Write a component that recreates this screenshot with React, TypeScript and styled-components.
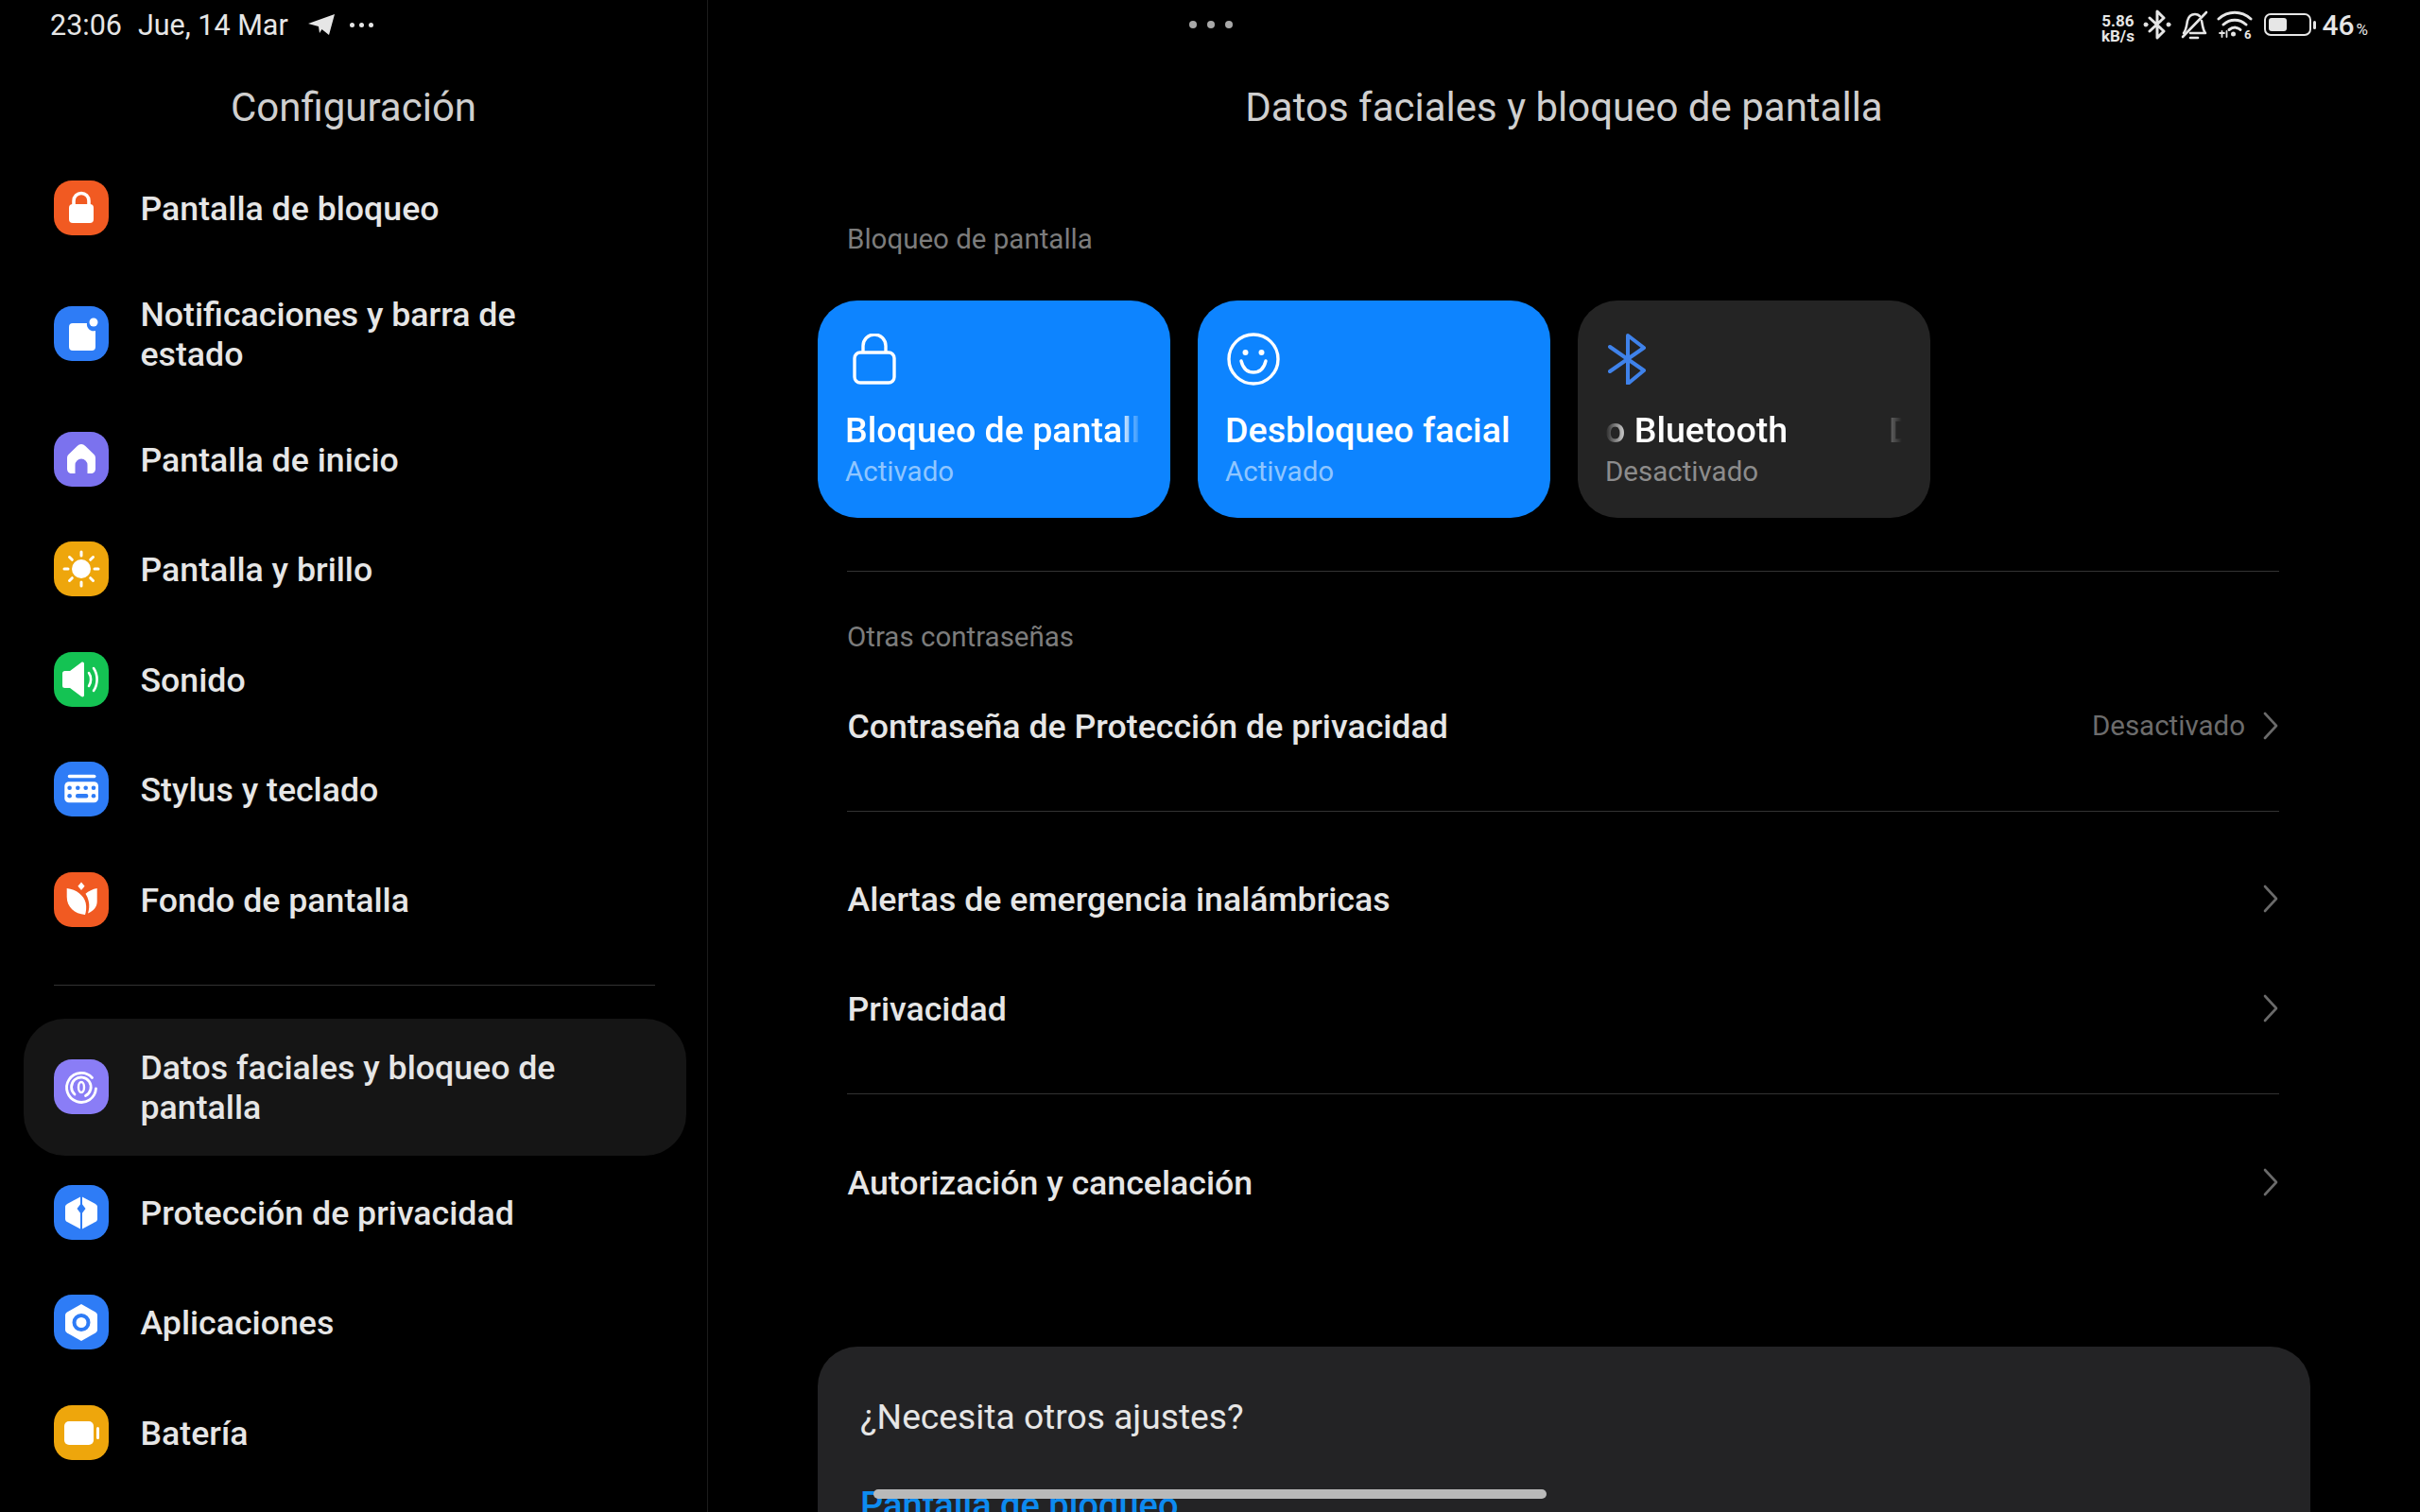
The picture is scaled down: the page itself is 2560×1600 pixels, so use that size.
import React from 'react';
import styled, { createGlobalStyle } from 'styled-components';

const GlobalStyle = createGlobalStyle`
  html, body {
    margin: 0;
    padding: 0;
    background: #000;
    font-family: Roboto, "Noto Sans", "Liberation Sans", sans-serif;
  }
`;

const Chevron = () => (
  <ChevronSvg viewBox="0 0 16 30" fill="none" stroke="#6a6a6a" strokeWidth="2.6" strokeLinecap="round" strokeLinejoin="round">
    <path d="M2 2 L14 15 L2 28" />
  </ChevronSvg>
);

const icons: Record<string, React.ReactNode> = {
  lock: (
    <>
      <path d="M21 27v-5.5a8 8 0 0 1 16 0V27" fill="none" stroke="#fff" strokeWidth="3.6" />
      <rect x="16" y="25" width="26" height="20" rx="4" fill="#fff" />
    </>
  ),
  notif: (
    <>
      <path d="M20 18h15a7 7 0 0 0 9 8v17a4 4 0 0 1-4 4H20a4 4 0 0 1-4-4V22a4 4 0 0 1 4-4z" fill="#fff" />
      <circle cx="42" cy="17" r="4.5" fill="#fff" />
    </>
  ),
  home: (
    <path d="M29 13c1.6 0 3 .8 4.3 2l9 8.8c1.4 1.4 1.7 2.6 1.7 4.4V39c0 3-2 5-5 5h-3.5V35a6.5 6.5 0 0 0-13 0v9H19c-3 0-5-2-5-5V28.2c0-1.8.3-3 1.7-4.4l9-8.8c1.3-1.2 2.7-2 4.3-2z" fill="#fff" />
  ),
  sun: (
    <>
      <circle cx="29" cy="29" r="10" fill="#fff" />
      <g stroke="#fff" strokeWidth="3" strokeLinecap="round">
        <path d="M29 11v4M29 43v4M11 29h4M43 29h4M16.5 16.5l2.8 2.8M38.7 38.7l2.8 2.8M16.5 41.5l2.8-2.8M38.7 19.3l2.8-2.8" />
      </g>
    </>
  ),
  sound: (
    <>
      <path d="M9 22.5c0-1.4 1.1-2.5 2.5-2.5H17L29 11c1.5-1 3-.2 3 1.5v33c0 1.7-1.5 2.5-3 1.5L17 38h-5.5A2.5 2.5 0 0 1 9 35.5z" fill="#fff" />
      <path d="M37 22c2.8 4 2.8 10 0 14M42 17c4.8 7 4.8 17 0 24" fill="none" stroke="#fff" strokeWidth="2.6" strokeLinecap="round" />
    </>
  ),
  keyboard: (
    <>
      <path d="M16.5 13.7h26c1 0 2 1 2.2 1.8-.2.8-1.2 1.8-2.2 1.8h-26a1.8 1.8 0 0 1 0-3.6z" fill="#fff" />
      <rect x="11.3" y="21.3" width="35.7" height="22" rx="4.5" fill="#fff" />
      <g fill="#2e7cf6">
        <circle cx="16.6" cy="27.7" r="2.3" />
        <circle cx="25.3" cy="27.7" r="2.3" />
        <circle cx="33.7" cy="27.7" r="2.3" />
        <circle cx="42" cy="27.7" r="2.3" />
        <circle cx="16.6" cy="36.3" r="2.3" />
        <rect x="23" y="34" width="13.3" height="4.6" rx="2" />
        <circle cx="42" cy="36.3" r="2.3" />
      </g>
    </>
  ),
  wallpaper: (
    <>
      <path d="M29 10.5l3.6 4.3-3.6 4.2-3.6-4.2z" fill="#fff" />
      <path d="M13.7 17c10.3 1.2 18 7.5 20 15.5 1 4.5.4 9.5-.7 12.5-11-1-19.3-8-19.3-19z" fill="#fff" />
      <path d="M45.7 17v14c0 5.5-3.7 10-9.7 12.5 1.3-4 1.8-8.5.8-12.5-.7-3.3-2-6.2-3.3-8.2 3.2-2.8 7.5-5 12.2-5.8z" fill="#fff" />
    </>
  ),
  face: (
    <g fill="none" stroke="#fff" strokeLinecap="round">
      <path d="M40.5 19.5A15.5 15.5 0 1 0 44.5 31" strokeWidth="2.8" />
      <path d="M22 37A10.3 10.3 0 1 1 33.5 38.5" strokeWidth="2.8" />
      <ellipse cx="29" cy="29.5" rx="3" ry="5.5" strokeWidth="2.4" />
    </g>
  ),
  shield: (
    <>
      <path d="M29 12l14.5 7.7c1.5.8 2.5 1.8 2.5 3.3v13c0 1.5-1 2.5-2.5 3.3L29 47l-14.5-7.7c-1.5-.8-2.5-1.8-2.5-3.3V23c0-1.5 1-2.5 2.5-3.3z" fill="#fff" />
      <path d="M29 10v39" stroke="#2e7cf6" strokeWidth="2" />
      <path d="M29 19l4.5 6-4.5 6-4.5-6z" fill="#2e7cf6" />
    </>
  ),
  apps: (
    <>
      <path d="M29 10l15 8.5c1.3.8 2 1.9 2 3.5v15c0 1.6-.7 2.7-2 3.5L29 49l-15-8.5c-1.3-.8-2-1.9-2-3.5V22c0-1.6.7-2.7 2-3.5z" fill="#fff" />
      <circle cx="29" cy="29.5" r="7.5" fill="none" stroke="#2e7cf6" strokeWidth="4" />
    </>
  ),
  battery: (
    <>
      <rect x="11" y="17" width="31" height="25" rx="5" fill="#fff" />
      <rect x="45" y="23" width="3" height="13" rx="1.5" fill="#fff" />
    </>
  ),
};

type Item = { label: string; icon: string; color: string; tall?: boolean; selected?: boolean };

const topItems: Item[] = [
  { label: 'Pantalla de bloqueo', icon: 'lock', color: '#f15a22' },
  { label: 'Notificaciones y barra de estado', icon: 'notif', color: '#2e7cf6', tall: true },
  { label: 'Pantalla de inicio', icon: 'home', color: '#7b72ee' },
  { label: 'Pantalla y brillo', icon: 'sun', color: '#eea60c' },
  { label: 'Sonido', icon: 'sound', color: '#14c353' },
  { label: 'Stylus y teclado', icon: 'keyboard', color: '#2e7cf6' },
  { label: 'Fondo de pantalla', icon: 'wallpaper', color: '#f15a22' },
];

const bottomItems: Item[] = [
  { label: 'Datos faciales y bloqueo de pantalla', icon: 'face', color: '#8a7df6', selected: true },
  { label: 'Protección de privacidad', icon: 'shield', color: '#2e7cf6' },
  { label: 'Aplicaciones', icon: 'apps', color: '#2e7cf6' },
  { label: 'Batería', icon: 'battery', color: '#eea60c' },
];

const NavRow = ({ item }: { item: Item }) => (
  <Row $tall={item.tall} $selected={item.selected}>
    <Tile $color={item.color}>
      <svg width="58" height="58" viewBox="0 0 58 58">{icons[item.icon]}</svg>
    </Tile>
    <RowLabel>{item.label}</RowLabel>
  </Row>
);

const SettingRow = ({ label, value, top }: { label: string; value?: string; top: number }) => (
  <Setting $top={top}>
    <SettingLabel>{label}</SettingLabel>
    <SettingRight>
      {value && <SettingValue>{value}</SettingValue>}
      <Chevron />
    </SettingRight>
  </Setting>
);

export default function App() {
  return (
    <Page>
      <GlobalStyle />
      <Sidebar>
        <LeftStatus>
          <StatusText>23:06</StatusText>
          <StatusText>Jue, 14 Mar</StatusText>
          <TelegramIcon viewBox="0 0 30 24">
            <path d="M29 1L23 23 15.5 17 13 21l-1-7-11-3z" fill="#e6e6e6" />
          </TelegramIcon>
          <Dots>
            <i /><i /><i />
          </Dots>
        </LeftStatus>
        <PaneTitle>Configuración</PaneTitle>
        {topItems.map((item) => (
          <NavRow key={item.label} item={item} />
        ))}
        <SideDivider />
        {bottomItems.map((item) => (
          <NavRow key={item.label} item={item} />
        ))}
      </Sidebar>

      <Main>
        <RightStatus>
          <CenterDots>
            <i /><i /><i />
          </CenterDots>
          <StatusIcons>
            <Speed>5.86<br />kB/s</Speed>
            <svg width="30" height="32" viewBox="0 0 30 32" fill="none" stroke="#e6e6e6" strokeWidth="3" strokeLinejoin="round" strokeLinecap="round">
              <path d="M7 9l15 14-7 7V2l7 7L7 23" />
              <circle cx="3" cy="16" r="2" fill="#e6e6e6" strokeWidth="1" />
              <circle cx="27" cy="16" r="2" fill="#e6e6e6" strokeWidth="1" />
            </svg>
            <svg width="30" height="32" viewBox="0 0 30 32" fill="none" stroke="#e6e6e6" strokeWidth="2.6" strokeLinecap="round" strokeLinejoin="round">
              <path d="M4 25c3-4 3-8 4-13 1-4 4-7 8-7 2 0 4 1 5 2M23 12c1 4 1 9 4 13H11" />
              <path d="M11 30h8" />
              <path d="M3 29L28 3" />
            </svg>
            <svg width="38" height="30" viewBox="0 0 38 30" fill="none" stroke="#e6e6e6" strokeWidth="3" strokeLinecap="round">
              <path d="M2 9c10-9 24-9 34 0M7 15c7-6.5 17-6.5 24 0" />
              <path d="M13 20.5c2-1.700 4-2.500 6.500-2.500" />
              <path d="M21 18.500c1.500.3 3 1 4 2" />
              <circle cx="17.500" cy="25" r="2.500" fill="#e6e6e6" stroke="none" />
              <path d="M3 24h5M5.500 22v6M10.500 22v6" strokeWidth="1.800" />
              <text x="29" y="30" fontSize="13" fontWeight="700" fill="#e6e6e6" stroke="none" fontFamily="Roboto, sans-serif">6</text>
            </svg>
            <BatteryShell>
              <BatteryBody>
                <BatteryFill style={{ width: '46%' }} />
              </BatteryBody>
              <BatteryNub />
            </BatteryShell>
            <BatteryPercent>46<small>%</small></BatteryPercent>
          </StatusIcons>
        </RightStatus>

        <PaneTitle>Datos faciales y bloqueo de pantalla</PaneTitle>

        <SectionLabel $top={71}>Bloqueo de pantalla</SectionLabel>
        <Cards>
          <Card $active>
            <CardIcon $inset={8}>
              <svg width="46" height="54" viewBox="0 0 46 54" fill="none" stroke="#fff" strokeWidth="3.4">
                <path d="M11 20v-7a12 12 0 0 1 24 0v7" />
                <rect x="2" y="20" width="42" height="32" rx="6" />
              </svg>
            </CardIcon>
            <CardTitle $fade="right">Bloqueo de pantalla</CardTitle>
            <CardSub $active>Activado</CardSub>
          </Card>
          <Card $active>
            <CardIcon $inset={1}>
              <svg width="58" height="58" viewBox="0 0 58 58" fill="none" stroke="#fff" strokeWidth="3.4" strokeLinecap="round">
                <circle cx="29" cy="29" r="26" />
                <path d="M16 31c2 8 7 12 13 12s11-4 13-12" />
                <circle cx="20.5" cy="22" r="3" fill="#fff" stroke="none" />
                <circle cx="37.5" cy="22" r="3" fill="#fff" stroke="none" />
              </svg>
            </CardIcon>
            <CardTitle>Desbloqueo facial</CardTitle>
            <CardSub $active>Activado</CardSub>
          </Card>
          <Card>
            <CardIcon $inset={1}>
              <svg width="46" height="54" viewBox="0 0 46 54" fill="none" stroke="#3f82ea" strokeWidth="4" strokeLinejoin="round" strokeLinecap="round">
                <path d="M4 14l36 25-17 14V2l17 13L4 40" />
              </svg>
            </CardIcon>
            <CardTitle $fade="both">
              o Bluetooth<GhostLetter>D</GhostLetter>
            </CardTitle>
            <CardSub>Desactivado</CardSub>
          </Card>
        </Cards>

        <Inset>
          <Divider $top={56} />
          <SectionLabel $top={49}>Otras contraseñas</SectionLabel>
          <SettingRow top={16} label="Contraseña de Protección de privacidad" value="Desactivado" />
          <Divider $top={32} />
          <SettingRow top={34} label="Alertas de emergencia inalámbricas" />
          <SettingRow top={0} label="Privacidad" />
          <Divider $top={32} />
          <SettingRow top={35} label="Autorización y cancelación" />
        </Inset>

        <HelpPanel>
          <HelpTitle>¿Necesita otros ajustes?</HelpTitle>
          <HelpLink>Pantalla de bloqueo</HelpLink>
        </HelpPanel>
      </Main>
      <HomeBar />
    </Page>
  );
}

const Page = styled.div`
  position: relative;
  display: flex;
  width: 2560px;
  height: 1600px;
  overflow: hidden;
  background: #000;
  color: #e6e6e6;
`;

const Sidebar = styled.aside`
  flex: 0 0 748px;
  height: 1600px;
  border-right: 1px solid #1c1c1c;
  overflow: hidden;
`;

const Main = styled.main`
  flex: 1;
  min-width: 0;
  height: 1600px;
  padding: 0 116px;
  overflow: hidden;
`;

const LeftStatus = styled.div`
  display: flex;
  align-items: center;
  gap: 17px;
  height: 52px;
  padding-left: 53px;
`;

const StatusText = styled.span`
  font-size: 30.5px;
  color: #e6e6e6;
`;

const TelegramIcon = styled.svg`
  width: 30px;
  height: 24px;
  margin-left: 3px;
`;

const Dots = styled.span`
  display: flex;
  gap: 5px;
  margin-left: -2px;

  i {
    width: 5px;
    height: 5px;
    border-radius: 50%;
    background: #e6e6e6;
  }
`;

const RightStatus = styled.div`
  display: flex;
  align-items: center;
  justify-content: space-between;
  height: 52px;
  margin-right: -61px;
  margin-left: 393px;
`;

const CenterDots = styled(Dots)`
  gap: 11px;
  margin-left: 0;

  i {
    width: 8px;
    height: 8px;
    background: #a8a8a8;
  }
`;

const StatusIcons = styled.div`
  display: flex;
  align-items: center;
  gap: 9px;
`;

const Speed = styled.span`
  width: 36px;
  margin-top: 8px;
  font-size: 17px;
  line-height: 16px;
  font-weight: 700;
  text-align: center;
  white-space: nowrap;
  color: #e6e6e6;
`;

const BatteryShell = styled.span`
  display: flex;
  align-items: center;
  gap: 2px;
  margin-left: 3px;
  margin-right: -3px;
`;

const BatteryBody = styled.span`
  display: block;
  box-sizing: border-box;
  width: 50px;
  height: 24px;
  padding: 3px;
  border: 2px solid #e6e6e6;
  border-radius: 7px;
`;

const BatteryFill = styled.span`
  display: block;
  height: 100%;
  border-radius: 3px;
  background: #e6e6e6;
`;

const BatteryNub = styled.span`
  width: 3px;
  height: 9px;
  border-radius: 2px;
  background: #e6e6e6;
`;

const BatteryPercent = styled.span`
  font-size: 30px;
  font-weight: 500;
  color: #e6e6e6;

  small {
    margin-left: 2px;
    font-size: 17px;
    font-weight: 400;
  }
`;

const PaneTitle = styled.h1`
  margin: 0;
  padding: 38px 0 24px;
  font-size: 42px;
  line-height: 48px;
  font-weight: 440;
  text-align: center;
  color: #cfcfcf;
`;

const Row = styled.div<{ $tall?: boolean; $selected?: boolean }>`
  display: flex;
  align-items: center;
  gap: 33.5px;
  height: ${(p) => (p.$selected ? '145px' : p.$tall ? '149px' : '116.5px')};
  margin: ${(p) => (p.$selected ? '0 22px 2px 25px' : '0')};
  padding-left: ${(p) => (p.$selected ? '32px' : '57px')};
  border-radius: 44px;
  background: ${(p) => (p.$selected ? '#151515' : 'transparent')};
`;

const Tile = styled.span<{ $color: string }>`
  flex: 0 0 58px;
  width: 58px;
  height: 58px;
  border-radius: 19px;
  background: ${(p) => p.$color};

  svg {
    display: block;
  }
`;

const RowLabel = styled.span`
  max-width: 500px;
  padding-top: 2px;
  font-size: 35.7px;
  line-height: 42px;
  font-weight: 480;
  color: #e6e6e6;
`;

const SideDivider = styled.div`
  height: 1px;
  margin: 31.5px 55px 35px 57px;
  background: #333;
`;

const SectionLabel = styled.div<{ $top: number }>`
  margin-top: ${(p) => p.$top}px;
  padding-left: ${(p) => (p.$top === 71 ? 31 : 0)}px;
  font-size: 29.5px;
  line-height: 40px;
  color: #7c7c7c;
`;

const Cards = styled.div`
  display: flex;
  gap: 29px;
  margin-top: 45px;
`;

const Card = styled.div<{ $active?: boolean }>`
  box-sizing: border-box;
  flex: 0 0 373px;
  width: 373px;
  min-width: 0;
  height: 230px;
  padding: 32px 30px 0 29px;
  border-radius: 42px;
  background: ${(p) => (p.$active ? '#0d84ff' : '#242424')};
`;

const CardIcon = styled.div<{ $inset: number }>`
  display: flex;
  align-items: center;
  height: 60px;
  padding-left: ${(p) => p.$inset}px;
`;

const titleMasks = {
  right: 'linear-gradient(to right, #000 calc(100% - 24px), transparent 100%)',
  both: 'linear-gradient(to right, transparent 0, #000 26px, #000 calc(100% - 30px), transparent 100%)',
};

const CardTitle = styled.div<{ $fade?: 'right' | 'both' }>`
  display: flex;
  justify-content: space-between;
  margin-top: 21px;
  overflow: hidden;
  white-space: nowrap;
  font-size: 37.6px;
  line-height: 48px;
  font-weight: 500;
  color: #fff;
  mask-image: ${(p) => (p.$fade ? titleMasks[p.$fade] : 'none')};
`;

const GhostLetter = styled.span`
  width: 14px;
  overflow: hidden;
  opacity: 0.7;
`;

const CardSub = styled.div<{ $active?: boolean }>`
  font-size: 29.5px;
  line-height: 40px;
  color: ${(p) => (p.$active ? '#8fc6ff' : '#8c8c8c')};
`;

const Inset = styled.div`
  padding: 0 33px 0 31px;
`;

const Divider = styled.div<{ $top: number }>`
  height: 1px;
  margin-top: ${(p) => p.$top}px;
  background: #333;
`;

const Setting = styled.div<{ $top: number }>`
  display: flex;
  align-items: center;
  justify-content: space-between;
  height: 116px;
  margin-top: ${(p) => p.$top}px;
`;

const SettingLabel = styled.span`
  padding-top: 2px;
  padding-left: 0.5px;
  font-size: 35.7px;
  font-weight: 480;
  color: #e6e6e6;
`;

const SettingRight = styled.span`
  display: flex;
  align-items: center;
  gap: 19px;
  padding-right: 1px;
`;

const SettingValue = styled.span`
  font-size: 29.5px;
  color: #6c6c6c;
`;

const ChevronSvg = styled.svg`
  width: 16px;
  height: 30px;
`;

const HelpPanel = styled.section`
  box-sizing: border-box;
  height: 300px;
  margin-top: 116px;
  padding: 54px 45px 0;
  border-radius: 42px 42px 0 0;
  background: #232325;
`;

const HelpTitle = styled.div`
  font-size: 37.2px;
  line-height: 40px;
  color: #e6e6e6;
`;

const HelpLink = styled.div`
  margin-top: 53px;
  font-size: 38px;
  line-height: 42px;
  font-weight: 500;
  color: #0d8bf0;
`;

const HomeBar = styled.div`
  position: absolute;
  left: 924px;
  top: 1576px;
  width: 712px;
  height: 10px;
  border-radius: 5px;
  background: #b9b9b9;
`;
